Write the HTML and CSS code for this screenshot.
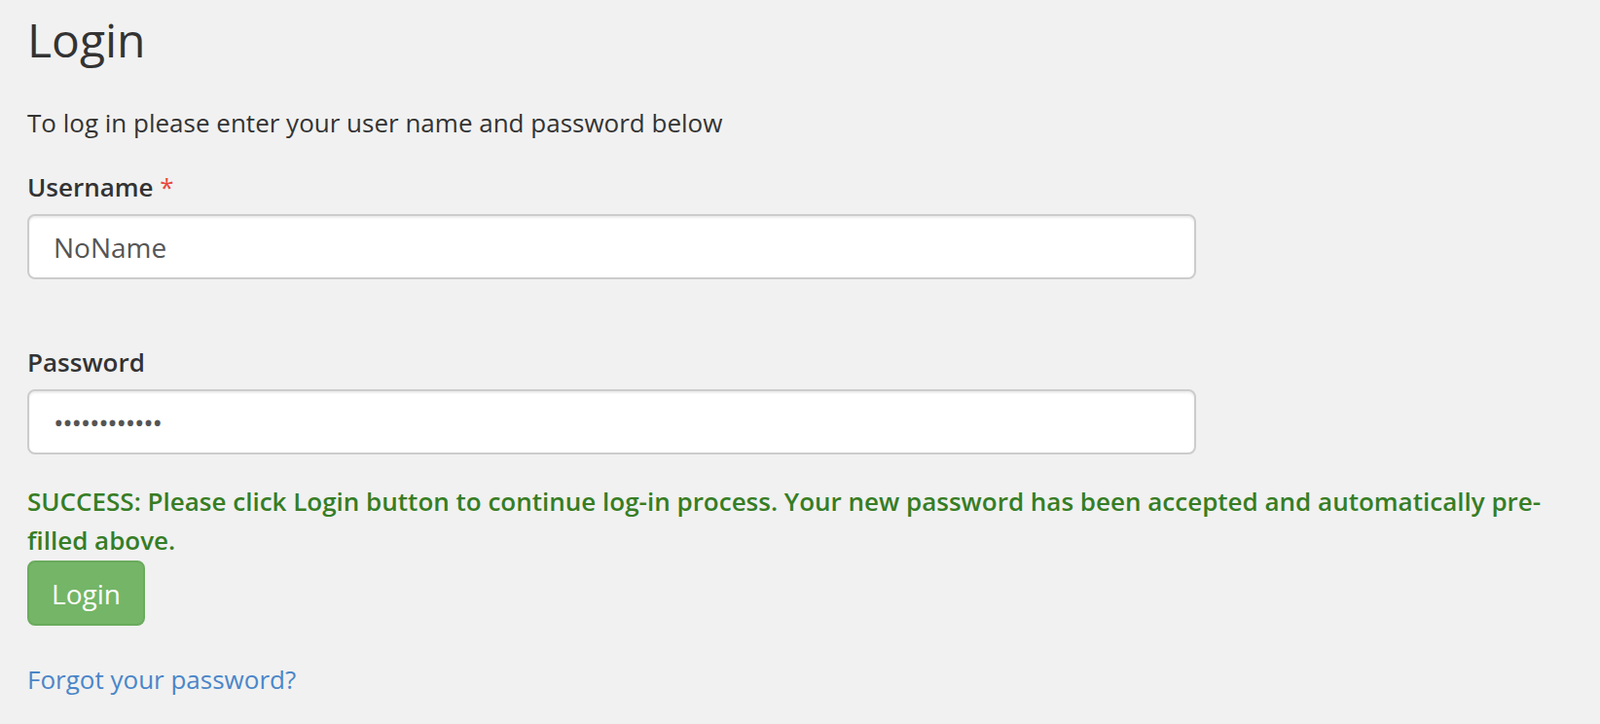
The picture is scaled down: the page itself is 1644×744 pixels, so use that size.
FILE: index.html
```html
<!DOCTYPE html>
<html lang="en">
<head>
    <meta charset="UTF-8">
    <meta name="viewport" content="width=device-width, initial-scale=1.0">
    <title>Login</title>
    <link rel="stylesheet" href="styles.css">
</head>
<body>
    <div class="container">
        <h1>Login</h1>
        <p class="intro">To log in please enter your user name and password below</p>

        <form id="loginForm" method="post" action="#">
            <div class="form-group form-group-user">
                <label for="username">Username <span class="required">*</span></label>
                <input type="text" id="username" name="username" class="form-control" value="NoName">
            </div>
            <div class="form-group form-group-pass">
                <label for="password">Password</label>
                <input type="password" id="password" name="password" class="form-control form-control-pass" value="abcdefghijkl">
            </div>
            <p class="message-success">SUCCESS: Please click Login button to continue log-in process. Your new password has been accepted and automatically pre-filled above.</p>
            <button type="submit" class="btn-login">Login</button>
        </form>

        <a href="#" class="forgot">Forgot your password?</a>
    </div>
</body>
</html>
```

FILE: styles.css
```css
body {
    margin: 0;
    padding: 0;
    background-color: #f1f1f1;
    font-family: 'Open Sans', sans-serif;
    font-size: 26px;
    line-height: 40px;
    color: #333;
}

.container {
    padding: 0 28px;
}

h1 {
    font-size: 48px;
    font-weight: 400;
    line-height: 52px;
    margin: 15px 0 39px;
}

.intro {
    margin: 0 0 26px;
}

label {
    display: block;
    font-weight: 600;
    margin-bottom: 8px;
}

.required {
    color: #e8483c;
    font-weight: 400;
}

.form-group-user {
    margin-bottom: 65px;
}

.form-group-pass {
    margin-bottom: 28px;
}

.form-control {
    display: block;
    box-sizing: border-box;
    width: 1201px;
    height: 67px;
    padding: 0 25px;
    border: 2px solid #ccc;
    border-radius: 8px;
    background-color: #fff;
    box-shadow: inset 0 2px 2px rgba(0, 0, 0, 0.075);
    font-family: 'Open Sans', sans-serif;
    font-size: 28px;
    color: #555;
    outline: none;
}

.form-control-pass {
    letter-spacing: -1.3px;
}

.message-success {
    margin: 0 0 1px;
    color: #367d24;
    font-weight: 600;
}

.btn-login {
    display: block;
    box-sizing: border-box;
    width: 121px;
    height: 67px;
    padding: 0;
    background-color: #74b567;
    border: 2px solid #6aab5d;
    border-radius: 8px;
    color: #fff;
    font-family: 'Open Sans', sans-serif;
    font-size: 28px;
    cursor: pointer;
}

.btn-login:hover {
    background-color: #5cb85c;
}

.forgot {
    display: inline-block;
    margin-top: 35px;
    color: #4a86c8;
    text-decoration: none;
}
```
